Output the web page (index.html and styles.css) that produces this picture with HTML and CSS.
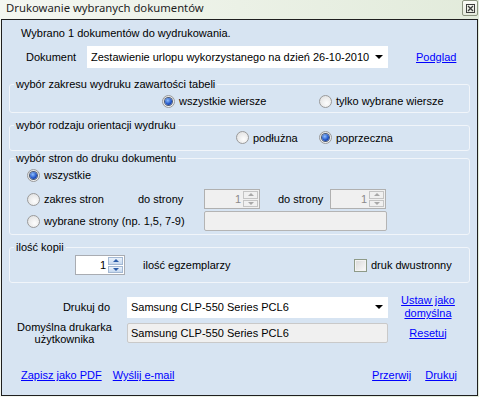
FILE: index.html
```html
<!DOCTYPE html>
<html lang="pl">
<head>
    <meta charset="UTF-8">
    <title>Drukowanie wybranych dokumentów</title>
    <link rel="stylesheet" href="styles.css">
</head>
<body>
    <div class="window">
        <div class="titlebar">
            <span class="title">Drukowanie wybranych dokumentów</span>
            <span class="close">
                <svg width="9" height="9" viewBox="0 0 9 9">
                    <rect x="0.5" y="0.5" width="8" height="8" fill="none" stroke="#3c3c3c"/>
                    <path d="M2 2 L7 7 M7 2 L2 7" stroke="#3c3c3c" stroke-width="1.3"/>
                </svg>
            </span>
        </div>

        <div class="client">
            <p class="intro">Wybrano 1 dokumentów do wydrukowania.</p>

            <div class="doc-row">
                <span class="doc-label">Dokument</span>
                <div class="combo doc-combo">
                    <span>Zestawienie urlopu wykorzystanego na dzień 26-10-2010</span>
                    <span class="combo-arrow"></span>
                </div>
                <a class="link podglad" href="#">Podglad</a>
            </div>

            <fieldset class="group g-zakres">
                <legend>wybór zakresu wydruku zawartości tabeli</legend>
                <div class="opt-row">
                    <label class="opt w157"><span class="radio on"></span>wszystkie wiersze</label>
                    <label class="opt"><span class="radio"></span>tylko wybrane wiersze</label>
                </div>
            </fieldset>

            <fieldset class="group g-orient">
                <legend>wybór rodzaju orientacji wydruku</legend>
                <div class="opt-row">
                    <label class="opt w83"><span class="radio"></span>podłużna</label>
                    <label class="opt"><span class="radio on"></span>poprzeczna</label>
                </div>
            </fieldset>

            <fieldset class="group g-strony">
                <legend>wybór stron do druku dokumentu</legend>
                <div class="page-row first">
                    <label class="opt"><span class="radio on"></span>wszystkie</label>
                </div>
                <div class="page-row second">
                    <label class="opt w111"><span class="radio"></span>zakres stron</label>
                    <span class="w66">do strony</span>
                    <div class="spin disabled">
                        <span class="spin-val">1</span>
                        <span class="spin-btns"><span class="spin-up"></span><span class="spin-down"></span></span>
                    </div>
                    <span class="do2">do strony</span>
                    <div class="spin disabled">
                        <span class="spin-val">1</span>
                        <span class="spin-btns"><span class="spin-up"></span><span class="spin-down"></span></span>
                    </div>
                </div>
                <div class="page-row third">
                    <label class="opt w177"><span class="radio"></span>wybrane strony (np. 1,5, 7-9)</label>
                    <div class="textbox pages-box"></div>
                </div>
            </fieldset>

            <fieldset class="group g-kopie">
                <legend>ilość kopii</legend>
                <div class="copy-row">
                    <div class="spin active">
                        <span class="spin-val">1</span>
                        <span class="spin-btns"><span class="spin-up"></span><span class="spin-down"></span></span>
                    </div>
                    <span class="copies-label">ilość egzemplarzy</span>
                    <label class="opt"><span class="check"></span>druk dwustronny</label>
                </div>
            </fieldset>

            <div class="pr-row">
                <span class="pr-label right">Drukuj do</span>
                <div class="combo pr-combo">
                    <span>Samsung CLP-550 Series PCL6</span>
                    <span class="combo-arrow"></span>
                </div>
                <div class="pr-link"><a class="link" href="#">Ustaw jako<br>domyślna</a></div>
            </div>

            <div class="pr-row second">
                <span class="pr-label center">Domyślna drukarka<br>użytkownika</span>
                <div class="textbox pr-default">Samsung CLP-550 Series PCL6</div>
                <div class="pr-link"><a class="link" href="#">Resetuj</a></div>
            </div>

            <div class="bottom-row">
                <a class="link" href="#">Zapisz jako PDF</a>
                <a class="link mail" href="#">Wyślij e-mail</a>
                <a class="link cancel" href="#">Przerwij</a>
                <a class="link print" href="#">Drukuj</a>
            </div>
        </div>
    </div>
</body>
</html>
```

FILE: styles.css
```css
body {
    margin: 0;
    font-family: "Liberation Sans", Arial, sans-serif;
    font-size: 11px;
    color: #000;
}
.window {
    width: 479px;
    height: 397px;
    box-sizing: border-box;
    padding: 0 1px 1px;
    background: linear-gradient(90deg, #f4f7f1, #e2ebdb);
    display: flex;
    flex-direction: column;
}
.titlebar {
    height: 19px;
    display: flex;
    justify-content: space-between;
    align-items: flex-start;
}
.title {
    font-family: "Noto Sans", "DejaVu Sans", sans-serif;
    font-size: 11.3px;
    line-height: 16px;
    padding-left: 5px;
    color: #1e1e1e;
}
.close {
    width: 16px;
    height: 16px;
    box-sizing: border-box;
    border: 1px solid #8c9580;
    border-radius: 2px;
    background: linear-gradient(#fafbf7, #e4eadc);
    display: flex;
    align-items: center;
    justify-content: center;
}
.client {
    flex: 1;
    border: 1px solid #1f1f1f;
    background: #d7e4f2;
}
.intro {
    margin: 7px 0 0 19px;
    line-height: 13px;
}
.link {
    color: #0000ff;
    text-decoration: underline;
    line-height: 13px;
}

/* combo boxes */
.doc-row {
    display: flex;
    align-items: center;
    height: 22px;
    margin-top: 6px;
}
.doc-label {
    margin-left: 24px;
    width: 61px;
}
.combo {
    height: 22px;
    box-sizing: border-box;
    background: #fff;
    display: flex;
    align-items: center;
    justify-content: space-between;
    padding: 0 5px 0 4px;
    white-space: nowrap;
}
.combo-arrow {
    width: 0;
    height: 0;
    border-left: 4px solid transparent;
    border-right: 4px solid transparent;
    border-top: 4px solid #000;
}
.doc-combo {
    width: 301px;
}
.podglad {
    margin-left: 28px;
}

/* group boxes */
.group {
    margin: 10px 0 0 7px;
    width: 461px;
    box-sizing: border-box;
    padding: 0;
    border: 1px solid #f1f5fa;
    border-radius: 3px;
    min-inline-size: 0;
}
.group legend {
    margin-left: 4px;
    padding: 0 2px;
    line-height: 12px;
}
.g-orient, .g-kopie {
    margin-top: 6px;
}
.g-strony {
    margin-top: 1px;
}
.opt {
    display: flex;
    align-items: center;
    gap: 4px;
    white-space: nowrap;
}
.opt-row {
    display: flex;
    align-items: center;
}
.g-zakres .opt-row {
    height: 22px;
    padding-left: 152px;
}
.g-orient .opt-row {
    height: 13px;
    padding-left: 226px;
    margin-bottom: 6px;
}
.w157 { width: 157px; }
.w83 { width: 83px; }
.w111 { width: 111px; }
.w66 { width: 66px; }
.w177 { width: 177px; }

.radio {
    width: 13px;
    height: 13px;
    box-sizing: border-box;
    border-radius: 50%;
    border: 1px solid #9a9a9a;
    background: radial-gradient(circle at 60% 65%, #fdfdfd, #dcdcdc);
    display: flex;
    align-items: center;
    justify-content: center;
    flex-shrink: 0;
}
.radio.on::after {
    content: "";
    width: 7px;
    height: 7px;
    border-radius: 50%;
    background: radial-gradient(circle at 40% 35%, #8fc0ff, #1c4fc4 60%, #0d2a72);
    box-shadow: 0 0 0 1px #4a5a74;
}
.check {
    width: 13px;
    height: 13px;
    box-sizing: border-box;
    border: 1px solid #8e9a88;
    background: linear-gradient(135deg, #d8d8d8, #fbfbfb);
    box-shadow: inset 0 0 0 1px #f3f3f3;
    flex-shrink: 0;
}

/* pages */
.page-row {
    display: flex;
    align-items: center;
    padding-left: 17px;
    height: 20px;
}
.page-row.first {
    height: 22px;
}
.page-row.second {
    margin-top: 3px;
}
.page-row.third {
    margin-top: 2px;
    margin-bottom: 3px;
}
.do2 {
    margin-left: 18px;
    width: 52px;
}
.textbox {
    height: 20px;
    box-sizing: border-box;
    background: #f0f0f0;
    border: 1px solid #c9c9c9;
    border-radius: 2px;
}
.pages-box {
    width: 183px;
    border-color: #b4b4b4;
}

/* spinners */
.spin {
    height: 20px;
    width: 56px;
    box-sizing: border-box;
    border: 1px solid #b0b0b0;
    display: flex;
    justify-content: flex-end;
    padding: 1px;
}
.spin-val {
    flex: 1;
    text-align: right;
    padding-right: 2px;
    line-height: 16px;
}
.spin-btns {
    width: 15px;
    display: flex;
    flex-direction: column;
    gap: 1px;
}
.spin-up, .spin-down {
    flex: 1;
    box-sizing: border-box;
    border: 1px solid #c4c4c4;
    display: flex;
    align-items: center;
    justify-content: center;
}
.spin-up::after, .spin-down::after {
    content: "";
    border-left: 3px solid transparent;
    border-right: 3px solid transparent;
}
.spin-up::after {
    border-bottom: 3px solid #a8a8a8;
}
.spin-down::after {
    border-top: 3px solid #a8a8a8;
}
.spin.disabled {
    background: #f0f0f0;
    color: #8a8a8a;
}
.spin.active {
    width: 50px;
    background: #fff;
    border-color: #a9acb2;
}
.spin.active .spin-up, .spin.active .spin-down {
    border-color: #a3b8d3;
    background: linear-gradient(#eaf2fb, #c5d8ef);
}
.spin.active .spin-up::after {
    border-bottom-color: #2b5ca8;
}
.spin.active .spin-down::after {
    border-top-color: #2b5ca8;
}

/* copies */
.copy-row {
    display: flex;
    align-items: center;
    height: 20px;
    margin: 2px 0 7px;
    padding-left: 65px;
}
.copies-label {
    margin-left: 18px;
    width: 211px;
}

/* printer */
.pr-row {
    display: flex;
    align-items: center;
    height: 26px;
    margin-top: 11px;
}
.pr-row.second {
    height: 24px;
    margin-top: 1px;
}
.pr-label {
    width: 125px;
    box-sizing: border-box;
    line-height: 12px;
}
.pr-label.right {
    text-align: right;
    padding-right: 17px;
}
.pr-label.center {
    text-align: center;
}
.pr-combo {
    width: 261px;
    height: 21px;
}
.pr-default {
    width: 261px;
    padding-left: 3px;
    line-height: 18px;
}
.pr-link {
    margin-left: 10px;
    width: 60px;
    text-align: center;
}

.bottom-row {
    display: flex;
    margin-top: 24px;
    padding: 0 20px 0 19px;
}
.mail {
    margin-left: 11px;
}
.cancel {
    margin-left: auto;
}
.print {
    margin-left: 14px;
}
```
